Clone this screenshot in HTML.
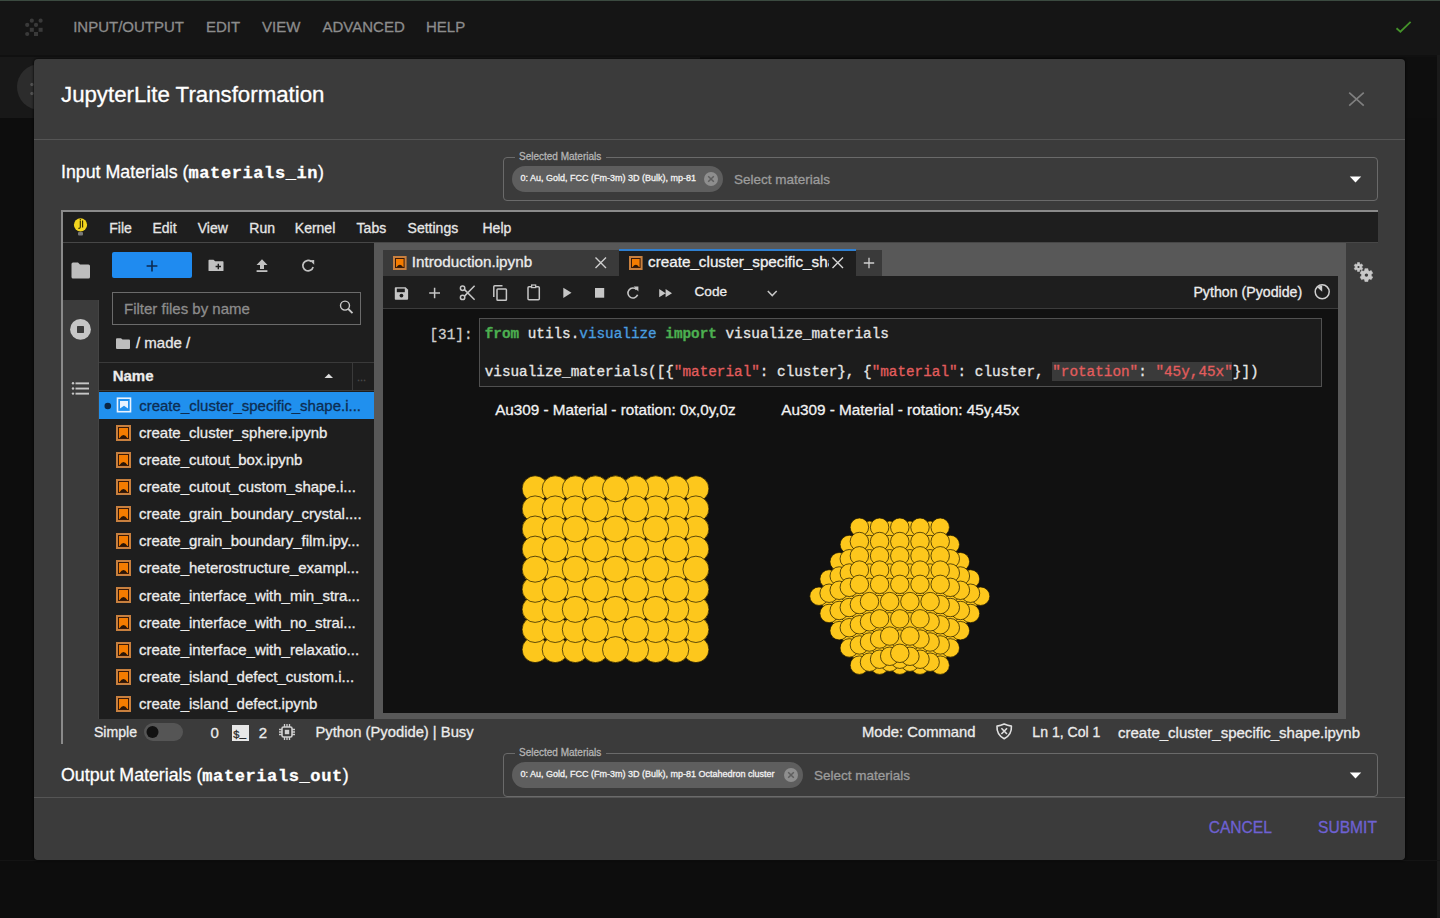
<!DOCTYPE html>
<html><head><meta charset="utf-8"><title>JupyterLite Transformation</title>
<style>
html,body{margin:0;padding:0}
body{width:1440px;height:918px;overflow:hidden;position:relative;background:#0e0e0e;font-family:"Liberation Sans",sans-serif}
.t{position:absolute;white-space:pre;-webkit-text-stroke:0.3px currentColor}
.r{position:absolute}
svg.r{overflow:visible}
.mn{font-family:'Liberation Mono',monospace;font-size:17px;letter-spacing:0.6px;font-weight:700}
</style></head><body>
<div class="r" style="left:0px;top:0px;width:1440px;height:55px;background:#151515;"></div>
<div class="r" style="left:0px;top:0px;width:1440px;height:1px;background:#3b4a40;"></div>
<div class="r" style="left:0px;top:55px;width:700px;height:63px;background:#181818;"></div>
<div class="r" style="left:0px;top:118px;width:1440px;height:800px;background:#0d0d0d;"></div>
<div class="r" style="left:0px;top:55px;width:1440px;height:2px;background:#101010;"></div>
<div class="r" style="left:1437px;top:55px;width:3px;height:863px;background:#1a1a1a;"></div>
<div class="r" style="left:0px;top:860px;width:1440px;height:1px;background:#141414;"></div>
<svg class="r" style="left:15px;top:10px;" width="40" height="35" viewBox="0 0 40 35"><circle cx="16.8" cy="10.7" r="2.1" fill="#3a3a3a"/><circle cx="25.6" cy="10.7" r="2.1" fill="#3a3a3a"/><circle cx="12.2" cy="14.899999999999999" r="2.1" fill="#3a3a3a"/><circle cx="21" cy="14.899999999999999" r="2.1" fill="#3a3a3a"/><rect x="14.8" y="17.8" width="4" height="4" fill="#3a3a3a"/><rect x="23.6" y="17.8" width="4" height="4" fill="#3a3a3a"/><circle cx="12.2" cy="24" r="2.1" fill="#3a3a3a"/><rect x="19" y="22" width="4" height="4" fill="#3a3a3a"/></svg>
<div class="t" style="left:73.2px;top:19.30px;font-size:15px;line-height:15px;color:#8c8c8c;font-family:'Liberation Sans', sans-serif;font-weight:400;">INPUT/OUTPUT</div>
<div class="t" style="left:205.9px;top:19.30px;font-size:15px;line-height:15px;color:#8c8c8c;font-family:'Liberation Sans', sans-serif;font-weight:400;">EDIT</div>
<div class="t" style="left:262.1px;top:19.30px;font-size:15px;line-height:15px;color:#8c8c8c;font-family:'Liberation Sans', sans-serif;font-weight:400;">VIEW</div>
<div class="t" style="left:322.5px;top:19.30px;font-size:15px;line-height:15px;color:#8c8c8c;font-family:'Liberation Sans', sans-serif;font-weight:400;">ADVANCED</div>
<div class="t" style="left:426px;top:19.30px;font-size:15px;line-height:15px;color:#8c8c8c;font-family:'Liberation Sans', sans-serif;font-weight:400;">HELP</div>
<svg class="r" style="left:1390px;top:15px;" width="30" height="25" viewBox="0 0 30 25"><path d="M6.5 13.3 L10.4 16.7 L20.6 6.9" fill="none" stroke="#44922a" stroke-width="1.8"/></svg>
<svg class="r" style="left:0px;top:60px;" width="40" height="60" viewBox="0 0 40 60"><circle cx="40" cy="27" r="23" fill="#2c2c2c"/><circle cx="32" cy="24.5" r="1.7" fill="#555"/><circle cx="32" cy="33.5" r="1.7" fill="#555"/></svg>
<div class="r" style="left:34px;top:59px;width:1371px;height:801px;background:#3b3b3b;border-radius:4px;box-shadow:0 0 2px 1px rgba(0,0,0,0.5)"></div>
<div class="t" style="left:61px;top:83.96px;font-size:22.25px;line-height:22.25px;color:#ffffff;font-family:'Liberation Sans', sans-serif;font-weight:400;">JupyterLite Transformation</div>
<svg class="r" style="left:1345px;top:88px;" width="24" height="24" viewBox="0 0 24 24"><path d="M4.2 4.6 L18.75 17.7 M18.75 4.6 L4.2 17.7" stroke="#808080" stroke-width="1.6" fill="none"/></svg>
<div class="r" style="left:34px;top:139px;width:1371px;height:1px;background:#555555;"></div>
<div class="t" style="left:61px;top:163.93px;font-size:17.8px;line-height:17.8px;color:#ffffff;font-family:'Liberation Sans', sans-serif;font-weight:400;">Input Materials (<span class="mn">materials_in</span>)</div>
<div class="r" style="left:503px;top:157px;width:873px;height:42px;border:1px solid #6a6a6a;border-radius:4px"></div>
<div class="r" style="left:515px;top:156px;width:91px;height:3px;background:#3b3b3b;"></div>
<div class="t" style="left:519px;top:151.83px;font-size:10px;line-height:10px;color:#b4b4b4;font-family:'Liberation Sans', sans-serif;font-weight:400;">Selected Materials</div>
<div class="r" style="left:512px;top:166.25px;width:211px;height:26px;border-radius:13px;background:#5e5e5e"></div>
<div class="t" style="left:520.5px;top:174.23px;font-size:9px;line-height:9px;color:#f2f2f2;font-family:'Liberation Sans', sans-serif;font-weight:400;">0: Au, Gold, FCC (Fm-3m) 3D (Bulk), mp-81</div>
<svg class="r" style="left:702.5px;top:171.25px;" width="16" height="16" viewBox="0 0 16 16"><circle cx="8" cy="8" r="7" fill="#8e8e8e"/><path d="M5.2 5.2 L10.8 10.8 M10.8 5.2 L5.2 10.8" stroke="#5e5e5e" stroke-width="1.5"/></svg>
<div class="t" style="left:734px;top:172.62px;font-size:13.5px;line-height:13.5px;color:#9c9c9c;font-family:'Liberation Sans', sans-serif;font-weight:400;">Select materials</div>
<svg class="r" style="left:1349px;top:176.25px;" width="13" height="7" viewBox="0 0 13 7"><path d="M0.8 0.5 L12.2 0.5 L6.5 6.5 Z" fill="#ffffff"/></svg>
<div class="r" style="left:61px;top:210px;width:1317px;height:534px;background:#3b3b3b;"></div>
<div class="r" style="left:61px;top:210px;width:1317px;height:2px;background:#8a8a8a;"></div>
<div class="r" style="left:61px;top:210px;width:2px;height:534px;background:#8a8a8a;"></div>
<div class="r" style="left:63px;top:212px;width:1315px;height:30px;background:#1e1e1e;"></div>
<div class="r" style="left:63px;top:242px;width:1315px;height:1px;background:#474747;"></div>
<svg class="r" style="left:70px;top:214px;" width="22" height="24" viewBox="0 0 22 24"><circle cx="10.5" cy="10.8" r="6.6" fill="#f3d51e"/><path d="M10.3 6.6 V12.8 Q10.3 14.6 8.4 14.4 M12.6 6.4 V13.6" stroke="#2a2400" stroke-width="1.1" fill="none"/><circle cx="10.3" cy="5.4" r="0.6" fill="#2a2400"/><rect x="8" y="18" width="5" height="3.6" rx="1" fill="#777"/></svg>
<div class="t" style="left:109.3px;top:220.85px;font-size:14px;line-height:14px;color:#e6e6e6;font-family:'Liberation Sans', sans-serif;font-weight:400;">File</div>
<div class="t" style="left:152.5px;top:220.85px;font-size:14px;line-height:14px;color:#e6e6e6;font-family:'Liberation Sans', sans-serif;font-weight:400;">Edit</div>
<div class="t" style="left:197.7px;top:220.85px;font-size:14px;line-height:14px;color:#e6e6e6;font-family:'Liberation Sans', sans-serif;font-weight:400;">View</div>
<div class="t" style="left:249.3px;top:220.85px;font-size:14px;line-height:14px;color:#e6e6e6;font-family:'Liberation Sans', sans-serif;font-weight:400;">Run</div>
<div class="t" style="left:294.8px;top:220.85px;font-size:14px;line-height:14px;color:#e6e6e6;font-family:'Liberation Sans', sans-serif;font-weight:400;">Kernel</div>
<div class="t" style="left:356.6px;top:220.85px;font-size:14px;line-height:14px;color:#e6e6e6;font-family:'Liberation Sans', sans-serif;font-weight:400;">Tabs</div>
<div class="t" style="left:407.6px;top:220.85px;font-size:14px;line-height:14px;color:#e6e6e6;font-family:'Liberation Sans', sans-serif;font-weight:400;">Settings</div>
<div class="t" style="left:482.5px;top:220.85px;font-size:14px;line-height:14px;color:#e6e6e6;font-family:'Liberation Sans', sans-serif;font-weight:400;">Help</div>
<div class="r" style="left:63px;top:243px;width:36px;height:476px;background:#3b3b3b;"></div>
<div class="r" style="left:63px;top:243px;width:36px;height:57px;background:#1e1e1e;"></div>
<div class="r" style="left:98px;top:300px;width:1px;height:419px;background:#444444;"></div>
<svg class="r" style="left:68px;top:258px;" width="26" height="24" viewBox="0 0 26 24"><path d="M3.5 6 Q3.5 4.5 5 4.5 L10 4.5 L12 6.5 L20.5 6.5 Q22 6.5 22 8 L22 19 Q22 20.5 20.5 20.5 L5 20.5 Q3.5 20.5 3.5 19 Z" fill="#bdbdbd"/></svg>
<svg class="r" style="left:68px;top:317px;" width="26" height="26" viewBox="0 0 26 26"><circle cx="12.5" cy="12.4" r="10.4" fill="#c6c6c6"/><rect x="9" y="8.9" width="7" height="7" rx="0.6" fill="#3b3b3b"/></svg>
<svg class="r" style="left:68px;top:378px;" width="26" height="20" viewBox="0 0 26 20"><g fill="#c6c6c6"><circle cx="5" cy="5.3" r="1.2"/><circle cx="5" cy="10.5" r="1.2"/><circle cx="5" cy="15.6" r="1.2"/><rect x="7.5" y="4.4" width="13.5" height="1.9"/><rect x="7.5" y="9.6" width="13.5" height="1.9"/><rect x="7.5" y="14.7" width="13.5" height="1.9"/></g></svg>
<div class="r" style="left:99px;top:243px;width:275px;height:476px;background:#1e1e1e;"></div>
<div class="r" style="left:112px;top:252px;width:80px;height:26px;background:#1f8bf0;border-radius:2px"></div>
<svg class="r" style="left:144px;top:257.5px;" width="16" height="16" viewBox="0 0 16 16"><path d="M8 2.6 L8 13.4 M2.6 8 L13.4 8" stroke="#0c2a50" stroke-width="1.6"/></svg>
<svg class="r" style="left:205px;top:256px;" width="22" height="18" viewBox="0 0 22 18"><path d="M3.5 4.5 Q3.5 3.8 4.2 3.8 L8.5 3.8 L10.2 5.3 L17.8 5.3 Q18.5 5.3 18.5 6 L18.5 14.4 Q18.5 15.1 17.8 15.1 L4.2 15.1 Q3.5 15.1 3.5 14.4 Z" fill="#c2c2c2"/><path d="M13.3 7.8 L13.3 13.2 M10.6 10.5 L16 10.5" stroke="#1e1e1e" stroke-width="1.4"/></svg>
<svg class="r" style="left:252px;top:256px;" width="20" height="18" viewBox="0 0 20 18"><path d="M10 3.2 L15.5 9 L12 9 L12 13 L8 13 L8 9 L4.5 9 Z" fill="#c2c2c2"/><rect x="4.6" y="14.2" width="10.8" height="1.8" fill="#c2c2c2"/></svg>
<svg class="r" style="left:298px;top:256px;" width="20" height="18" viewBox="0 0 20 18"><path d="M13.3 5.6 A5.2 5.2 0 1 0 15.1 11" fill="none" stroke="#c2c2c2" stroke-width="1.7"/><path d="M11.6 4.3 L16.2 4.1 L16.2 8.7 Z" fill="#c2c2c2"/></svg>
<div class="r" style="left:112px;top:292px;width:247px;height:31px;border:1px solid #6b6b6b"></div>
<div class="t" style="left:124px;top:301.30px;font-size:15px;line-height:15px;color:#8c8c8c;font-family:'Liberation Sans', sans-serif;font-weight:400;">Filter files by name</div>
<svg class="r" style="left:336px;top:297px;" width="22" height="22" viewBox="0 0 22 22"><circle cx="9" cy="8.6" r="4.5" fill="none" stroke="#c8c8c8" stroke-width="1.4"/><path d="M12.3 12 L16.5 16.2" stroke="#c8c8c8" stroke-width="1.8"/></svg>
<svg class="r" style="left:113px;top:334px;" width="20" height="18" viewBox="0 0 20 18"><path d="M3 5.2 Q3 4.2 4 4.2 L8 4.2 L9.5 5.6 L16 5.6 Q17 5.6 17 6.6 L17 14 Q17 15 16 15 L4 15 Q3 15 3 14 Z" fill="#bdbdbd"/></svg>
<div class="t" style="left:136px;top:335.10px;font-size:15px;line-height:15px;color:#e8e8e8;font-family:'Liberation Sans', sans-serif;font-weight:400;">/ made /</div>
<div class="r" style="left:99px;top:362px;width:275px;height:1px;background:#3a3a3a;"></div>
<div class="r" style="left:99px;top:390px;width:275px;height:1px;background:#3a3a3a;"></div>
<div class="r" style="left:352px;top:363px;width:1px;height:27px;background:#3a3a3a;"></div>
<div class="t" style="left:112.7px;top:368.10px;font-size:15px;line-height:15px;color:#ececec;font-family:'Liberation Sans', sans-serif;font-weight:700;">Name</div>
<svg class="r" style="left:319.5px;top:370px;" width="18" height="12" viewBox="0 0 18 12"><path d="M4.5 8 L13 8 L8.75 3.8 Z" fill="#dcdcdc"/></svg>
<div class="t" style="left:357px;top:371.69px;font-size:11px;line-height:11px;color:#4a4a4a;font-family:'Liberation Sans', sans-serif;font-weight:400;">...</div>
<div class="r" style="left:99px;top:392.3px;width:275px;height:26.5px;background:#2090ee;"></div>
<svg class="r" style="left:102px;top:397.3px;" width="12" height="18" viewBox="0 0 12 18"><circle cx="5.8" cy="9" r="3.3" fill="#0b2645"/></svg>
<svg class="r" style="left:114px;top:395.3px;" width="20" height="20" viewBox="0 0 20 20"><rect x="3.5" y="3.2" width="13" height="13.5" fill="none" stroke="#e8f2ff" stroke-width="1.6"/><path d="M6 6 L14 6 L14 13.5 L10 10.8 L6 13.5 Z" fill="#e8f2ff"/></svg>
<div class="t" style="left:139.2px;top:397.80px;font-size:15px;line-height:15px;color:#0d2d52;font-family:'Liberation Sans', sans-serif;font-weight:400;">create_cluster_specific_shape.i...</div>
<svg class="r" style="left:116px;top:424.8px;" width="15" height="16" viewBox="0 0 15 16"><rect x="1" y="1" width="13" height="14" fill="#3a1a08" stroke="#c8803f" stroke-width="2"/><rect x="3" y="3" width="9" height="10" fill="#f57c00"/><path d="M3.6 13.0 Q7.5 7.2 11.4 13.0 Z" fill="#2a1608"/></svg>
<div class="t" style="left:139px;top:424.90px;font-size:15px;line-height:15px;color:#ececec;font-family:'Liberation Sans', sans-serif;font-weight:400;">create_cluster_sphere.ipynb</div>
<svg class="r" style="left:116px;top:451.9px;" width="15" height="16" viewBox="0 0 15 16"><rect x="1" y="1" width="13" height="14" fill="#3a1a08" stroke="#c8803f" stroke-width="2"/><rect x="3" y="3" width="9" height="10" fill="#f57c00"/><path d="M3.6 13.0 Q7.5 7.2 11.4 13.0 Z" fill="#2a1608"/></svg>
<div class="t" style="left:139px;top:452.00px;font-size:15px;line-height:15px;color:#ececec;font-family:'Liberation Sans', sans-serif;font-weight:400;">create_cutout_box.ipynb</div>
<svg class="r" style="left:116px;top:479.0px;" width="15" height="16" viewBox="0 0 15 16"><rect x="1" y="1" width="13" height="14" fill="#3a1a08" stroke="#c8803f" stroke-width="2"/><rect x="3" y="3" width="9" height="10" fill="#f57c00"/><path d="M3.6 13.0 Q7.5 7.2 11.4 13.0 Z" fill="#2a1608"/></svg>
<div class="t" style="left:139px;top:479.10px;font-size:15px;line-height:15px;color:#ececec;font-family:'Liberation Sans', sans-serif;font-weight:400;">create_cutout_custom_shape.i...</div>
<svg class="r" style="left:116px;top:506.1px;" width="15" height="16" viewBox="0 0 15 16"><rect x="1" y="1" width="13" height="14" fill="#3a1a08" stroke="#c8803f" stroke-width="2"/><rect x="3" y="3" width="9" height="10" fill="#f57c00"/><path d="M3.6 13.0 Q7.5 7.2 11.4 13.0 Z" fill="#2a1608"/></svg>
<div class="t" style="left:139px;top:506.20px;font-size:15px;line-height:15px;color:#ececec;font-family:'Liberation Sans', sans-serif;font-weight:400;">create_grain_boundary_crystal....</div>
<svg class="r" style="left:116px;top:533.1999999999999px;" width="15" height="16" viewBox="0 0 15 16"><rect x="1" y="1" width="13" height="14" fill="#3a1a08" stroke="#c8803f" stroke-width="2"/><rect x="3" y="3" width="9" height="10" fill="#f57c00"/><path d="M3.6 13.0 Q7.5 7.2 11.4 13.0 Z" fill="#2a1608"/></svg>
<div class="t" style="left:139px;top:533.30px;font-size:15px;line-height:15px;color:#ececec;font-family:'Liberation Sans', sans-serif;font-weight:400;">create_grain_boundary_film.ipy...</div>
<svg class="r" style="left:116px;top:560.3000000000001px;" width="15" height="16" viewBox="0 0 15 16"><rect x="1" y="1" width="13" height="14" fill="#3a1a08" stroke="#c8803f" stroke-width="2"/><rect x="3" y="3" width="9" height="10" fill="#f57c00"/><path d="M3.6 13.0 Q7.5 7.2 11.4 13.0 Z" fill="#2a1608"/></svg>
<div class="t" style="left:139px;top:560.40px;font-size:15px;line-height:15px;color:#ececec;font-family:'Liberation Sans', sans-serif;font-weight:400;">create_heterostructure_exampl...</div>
<svg class="r" style="left:116px;top:587.4px;" width="15" height="16" viewBox="0 0 15 16"><rect x="1" y="1" width="13" height="14" fill="#3a1a08" stroke="#c8803f" stroke-width="2"/><rect x="3" y="3" width="9" height="10" fill="#f57c00"/><path d="M3.6 13.0 Q7.5 7.2 11.4 13.0 Z" fill="#2a1608"/></svg>
<div class="t" style="left:139px;top:587.50px;font-size:15px;line-height:15px;color:#ececec;font-family:'Liberation Sans', sans-serif;font-weight:400;">create_interface_with_min_stra...</div>
<svg class="r" style="left:116px;top:614.5px;" width="15" height="16" viewBox="0 0 15 16"><rect x="1" y="1" width="13" height="14" fill="#3a1a08" stroke="#c8803f" stroke-width="2"/><rect x="3" y="3" width="9" height="10" fill="#f57c00"/><path d="M3.6 13.0 Q7.5 7.2 11.4 13.0 Z" fill="#2a1608"/></svg>
<div class="t" style="left:139px;top:614.60px;font-size:15px;line-height:15px;color:#ececec;font-family:'Liberation Sans', sans-serif;font-weight:400;">create_interface_with_no_strai...</div>
<svg class="r" style="left:116px;top:641.6px;" width="15" height="16" viewBox="0 0 15 16"><rect x="1" y="1" width="13" height="14" fill="#3a1a08" stroke="#c8803f" stroke-width="2"/><rect x="3" y="3" width="9" height="10" fill="#f57c00"/><path d="M3.6 13.0 Q7.5 7.2 11.4 13.0 Z" fill="#2a1608"/></svg>
<div class="t" style="left:139px;top:641.70px;font-size:15px;line-height:15px;color:#ececec;font-family:'Liberation Sans', sans-serif;font-weight:400;">create_interface_with_relaxatio...</div>
<svg class="r" style="left:116px;top:668.6999999999999px;" width="15" height="16" viewBox="0 0 15 16"><rect x="1" y="1" width="13" height="14" fill="#3a1a08" stroke="#c8803f" stroke-width="2"/><rect x="3" y="3" width="9" height="10" fill="#f57c00"/><path d="M3.6 13.0 Q7.5 7.2 11.4 13.0 Z" fill="#2a1608"/></svg>
<div class="t" style="left:139px;top:668.80px;font-size:15px;line-height:15px;color:#ececec;font-family:'Liberation Sans', sans-serif;font-weight:400;">create_island_defect_custom.i...</div>
<svg class="r" style="left:116px;top:695.8000000000001px;" width="15" height="16" viewBox="0 0 15 16"><rect x="1" y="1" width="13" height="14" fill="#3a1a08" stroke="#c8803f" stroke-width="2"/><rect x="3" y="3" width="9" height="10" fill="#f57c00"/><path d="M3.6 13.0 Q7.5 7.2 11.4 13.0 Z" fill="#2a1608"/></svg>
<div class="t" style="left:139px;top:695.90px;font-size:15px;line-height:15px;color:#ececec;font-family:'Liberation Sans', sans-serif;font-weight:400;">create_island_defect.ipynb</div>
<div class="r" style="left:374px;top:243px;width:972px;height:476px;background:#585858;"></div>
<div class="r" style="left:1346px;top:243px;width:32px;height:476px;background:#3b3b3b;"></div>
<svg class="r" style="left:0;top:0" width="1440" height="918"><path d="M1357.34 263.91 L1357.47 262.62 L1359.53 262.62 L1359.66 263.91 L1360.59 264.45 L1361.78 263.92 L1362.81 265.70 L1361.76 266.46 L1361.76 267.54 L1362.81 268.30 L1361.78 270.08 L1360.59 269.55 L1359.66 270.09 L1359.53 271.38 L1357.47 271.38 L1357.34 270.09 L1356.41 269.55 L1355.22 270.08 L1354.19 268.30 L1355.24 267.54 L1355.24 266.46 L1354.19 265.70 L1355.22 263.92 L1356.41 264.45 Z" fill="#c8c8c8" stroke="#c8c8c8" stroke-width="0.6" stroke-linejoin="round"/><circle cx="1358.5" cy="267" r="1.1" fill="#3b3b3b"/><path d="M1364.67 270.51 L1364.89 268.67 L1367.91 268.67 L1368.13 270.51 L1369.51 271.31 L1371.21 270.58 L1372.72 273.19 L1371.23 274.30 L1371.23 275.90 L1372.72 277.01 L1371.21 279.62 L1369.51 278.89 L1368.13 279.69 L1367.91 281.53 L1364.89 281.53 L1364.67 279.69 L1363.29 278.89 L1361.59 279.62 L1360.08 277.01 L1361.57 275.90 L1361.57 274.30 L1360.08 273.19 L1361.59 270.58 L1363.29 271.31 Z" fill="#c8c8c8" stroke="#c8c8c8" stroke-width="0.6" stroke-linejoin="round"/><circle cx="1366.4" cy="275.1" r="1.7" fill="#3b3b3b"/></svg>
<div class="r" style="left:383px;top:249.6px;width:235.5px;height:26.400000000000006px;background:#3a3a3a;"></div>
<div class="r" style="left:383px;top:275.5px;width:235.5px;height:1.0px;background:#505050;"></div>
<svg class="r" style="left:392.6px;top:255.8px;" width="13.6" height="14" viewBox="0 0 13.6 14"><rect x="1" y="1" width="11.6" height="12" fill="#3a1a08" stroke="#c8803f" stroke-width="2"/><rect x="3" y="3" width="7.6" height="8" fill="#f57c00"/><path d="M3.6 11.0 Q6.8 6.3 10.0 11.0 Z" fill="#2a1608"/></svg>
<div class="t" style="left:411.8px;top:254.09px;font-size:15.25px;line-height:15.25px;color:#ececec;font-family:'Liberation Sans', sans-serif;font-weight:400;">Introduction.ipynb</div>
<svg class="r" style="left:592px;top:256px;" width="16" height="14" viewBox="0 0 16 14"><path d="M3.5 1.5 L14 12 M14 1.5 L3.5 12" stroke="#cfcfcf" stroke-width="1.4"/></svg>
<div class="r" style="left:619px;top:249px;width:236.5px;height:27px;background:#1e1e1e;"></div>
<div class="r" style="left:619px;top:249px;width:236.5px;height:2px;background:#2f7fd0;"></div>
<svg class="r" style="left:629px;top:255.8px;" width="13.6" height="14" viewBox="0 0 13.6 14"><rect x="1" y="1" width="11.6" height="12" fill="#3a1a08" stroke="#c8803f" stroke-width="2"/><rect x="3" y="3" width="7.6" height="8" fill="#f57c00"/><path d="M3.6 11.0 Q6.8 6.3 10.0 11.0 Z" fill="#2a1608"/></svg>
<div class="r" style="left:648px;top:252px;width:181px;height:22px;overflow:hidden">
<div class="t" style="left:0px;top:2.39px;font-size:15.25px;line-height:15.25px;color:#f2f2f2;font-family:'Liberation Sans', sans-serif;font-weight:400;">create_cluster_specific_shape.ipynb</div>
</div>
<svg class="r" style="left:829px;top:256px;" width="16" height="14" viewBox="0 0 16 14"><path d="M3.5 1.5 L14 12 M14 1.5 L3.5 12" stroke="#d8d8d8" stroke-width="1.4"/></svg>
<div class="r" style="left:856px;top:250px;width:26px;height:26px;background:#3a3a3a;"></div>
<svg class="r" style="left:861px;top:255px;" width="16" height="16" viewBox="0 0 16 16"><path d="M8 2.8 L8 13.2 M2.8 8 L13.2 8" stroke="#cfcfcf" stroke-width="1.3"/></svg>
<div class="r" style="left:383px;top:276px;width:955px;height:32px;background:#1e1e1e;"></div>
<div class="r" style="left:383px;top:307.5px;width:955px;height:1.0px;background:#3c3c3c;"></div>
<svg class="r" style="left:383px;top:276px;" width="420" height="32" viewBox="0 0 420 32"><path d="M12.6 11.2 H22.6 L25.1 13.7 V22.8 Q25.1 23.8 24.1 23.8 H12.6 Q11.8 23.8 11.8 23 V12 Q11.8 11.2 12.6 11.2 Z" fill="#c6c6c6"/><rect x="13.8" y="12.6" width="8" height="3.6" fill="#1e1e1e"/><circle cx="18.45" cy="19.6" r="1.9" fill="#1e1e1e"/><path d="M51.6 11.8 V22.3 M46.2 17 H57" stroke="#c6c6c6" stroke-width="1.5"/><g stroke="#c6c6c6" stroke-width="1.5" fill="none"><circle cx="79.6" cy="12.3" r="2.2"/><circle cx="79.6" cy="21.4" r="2.2"/><path d="M81.5 13.6 L91.6 23.8 M81.5 20.1 L91.6 9.8"/></g><g stroke="#c6c6c6" stroke-width="1.5" fill="none"><path d="M110.8 21 V10.8 Q110.8 9.8 111.8 9.8 H119.5"/><rect x="114" y="13" width="9.4" height="11.2" rx="0.8"/></g><g stroke="#c6c6c6" stroke-width="1.5" fill="none"><rect x="145" y="10.8" width="11.3" height="13" rx="1"/></g><path d="M148 8.4 H153.3 V12.2 H148 Z" fill="#c6c6c6"/><rect x="149.3" y="9.6" width="2.7" height="1.4" fill="#1e1e1e"/><path d="M180.3 11.7 L188.5 16.85 L180.3 22 Z" fill="#c6c6c6"/><rect x="212" y="12" width="9.2" height="9.7" fill="#c6c6c6"/><path d="M253.6 13.6 A5 5 0 1 0 254.6 18.8" fill="none" stroke="#c6c6c6" stroke-width="1.6"/><path d="M250.6 10.6 L255.4 10.6 L255.4 15.4 Z" fill="#c6c6c6"/><path d="M276.2 13 L282.6 17.15 L276.2 21.3 Z M282.6 13 L289 17.15 L282.6 21.3 Z" fill="#c6c6c6"/><path d="M384.8 15 L389.25 19.6 L393.7 15" fill="none" stroke="#c6c6c6" stroke-width="1.5"/></svg>
<div class="t" style="left:694.5px;top:285.08px;font-size:13.6px;line-height:13.6px;color:#ececec;font-family:'Liberation Sans', sans-serif;font-weight:400;">Code</div>
<div class="t" style="left:1193.4px;top:284.58px;font-size:14.2px;line-height:14.2px;color:#ececec;font-family:'Liberation Sans', sans-serif;font-weight:400;">Python (Pyodide)</div>
<svg class="r" style="left:1310px;top:280px;" width="24" height="24" viewBox="0 0 24 24"><circle cx="12.2" cy="11.8" r="7" fill="none" stroke="#cfcfcf" stroke-width="1.5"/><path d="M12.2 11.8 L12.2 5.5 A6.3 6.3 0 0 0 7.5 7.6 Z" fill="#cfcfcf"/></svg>
<div class="r" style="left:383px;top:308.5px;width:955px;height:404.5px;background:#111111;"></div>
<div class="r" style="left:479px;top:318px;width:841px;height:67px;border:1px solid #505050;background:#1c1c1c"></div>
<div class="r" style="left:1051.5px;top:361.7px;width:180.5px;height:19.100000000000023px;background:#3a3a3a;"></div>
<div class="t" style="left:429.5px;top:328.02px;font-size:14.33px;line-height:14.33px;color:#cfcfcf;font-family:'Liberation Mono', monospace;font-weight:400;">[31]:</div>
<div class="t" style="left:484.7px;top:327.32px;font-size:14.33px;line-height:14.33px;color:#e6e6e6;font-family:'Liberation Mono', monospace;font-weight:400;"><b style="color:#4caf50">from</b> utils.<span style="color:#4a9fe0">visualize</span> <b style="color:#4caf50">import</b> visualize_materials</div>
<div class="t" style="left:484.7px;top:364.72px;font-size:14.33px;line-height:14.33px;color:#e6e6e6;font-family:'Liberation Mono', monospace;font-weight:400;">visualize_materials([{<span style="color:#e35d5d">"material"</span>: cluster}, {<span style="color:#e35d5d">"material"</span>: cluster, <span style="color:#e35d5d">"rotation"</span>: <span style="color:#e35d5d">"45y,45x"</span>}])</div>
<div class="t" style="left:495.2px;top:402.09px;font-size:15.25px;line-height:15.25px;color:#f2f2f2;font-family:'Liberation Sans', sans-serif;font-weight:400;">Au309 - Material - rotation: 0x,0y,0z</div>
<div class="t" style="left:781.3px;top:402.05px;font-size:15.3px;line-height:15.3px;color:#f2f2f2;font-family:'Liberation Sans', sans-serif;font-weight:400;">Au309 - Material - rotation: 45y,45x</div>
<svg class="r" style="left:0;top:0" width="1440" height="918" viewBox="0 0 1440 918"><g fill="#fdc71c" stroke="#1a1400" stroke-width="0.7"><circle cx="555.20" cy="549.10" r="13.00"/><circle cx="575.30" cy="609.40" r="13.00"/><circle cx="655.70" cy="529.00" r="13.00"/><circle cx="595.40" cy="629.50" r="13.00"/><circle cx="655.70" cy="569.20" r="13.00"/><circle cx="655.70" cy="609.40" r="13.00"/><circle cx="635.60" cy="508.90" r="13.00"/><circle cx="675.80" cy="589.30" r="13.00"/><circle cx="575.30" cy="529.00" r="13.00"/><circle cx="575.30" cy="569.20" r="13.00"/><circle cx="615.50" cy="609.40" r="13.00"/><circle cx="595.40" cy="589.30" r="13.00"/><circle cx="635.60" cy="589.30" r="13.00"/><circle cx="635.60" cy="549.10" r="13.00"/><circle cx="635.60" cy="629.50" r="13.00"/><circle cx="615.50" cy="488.80" r="13.00"/><circle cx="595.40" cy="549.10" r="13.00"/><circle cx="595.40" cy="508.90" r="13.00"/><circle cx="615.50" cy="569.20" r="13.00"/><circle cx="555.20" cy="589.30" r="13.00"/><circle cx="675.80" cy="549.10" r="13.00"/><circle cx="615.50" cy="529.00" r="13.00"/><circle cx="535.10" cy="569.20" r="13.00"/><circle cx="615.50" cy="649.60" r="13.00"/><circle cx="695.90" cy="569.20" r="13.00"/><circle cx="675.80" cy="609.40" r="13.00"/><circle cx="575.30" cy="589.30" r="13.00"/><circle cx="635.60" cy="488.80" r="13.00"/><circle cx="575.30" cy="629.50" r="13.00"/><circle cx="655.70" cy="549.10" r="13.00"/><circle cx="555.20" cy="529.00" r="13.00"/><circle cx="535.10" cy="589.30" r="13.00"/><circle cx="595.40" cy="529.00" r="13.00"/><circle cx="615.50" cy="629.50" r="13.00"/><circle cx="655.70" cy="589.30" r="13.00"/><circle cx="635.60" cy="649.60" r="13.00"/><circle cx="595.40" cy="488.80" r="13.00"/><circle cx="635.60" cy="609.40" r="13.00"/><circle cx="635.60" cy="569.20" r="13.00"/><circle cx="595.40" cy="569.20" r="13.00"/><circle cx="555.20" cy="609.40" r="13.00"/><circle cx="555.20" cy="569.20" r="13.00"/><circle cx="675.80" cy="529.00" r="13.00"/><circle cx="675.80" cy="569.20" r="13.00"/><circle cx="615.50" cy="589.30" r="13.00"/><circle cx="535.10" cy="549.10" r="13.00"/><circle cx="615.50" cy="508.90" r="13.00"/><circle cx="615.50" cy="549.10" r="13.00"/><circle cx="635.60" cy="529.00" r="13.00"/><circle cx="655.70" cy="508.90" r="13.00"/><circle cx="575.30" cy="508.90" r="13.00"/><circle cx="655.70" cy="629.50" r="13.00"/><circle cx="595.40" cy="649.60" r="13.00"/><circle cx="595.40" cy="609.40" r="13.00"/><circle cx="575.30" cy="549.10" r="13.00"/><circle cx="695.90" cy="549.10" r="13.00"/><circle cx="695.90" cy="589.30" r="13.00"/><circle cx="575.30" cy="488.80" r="13.00"/><circle cx="595.40" cy="629.50" r="13.00"/><circle cx="655.70" cy="569.20" r="13.00"/><circle cx="555.20" cy="508.90" r="13.00"/><circle cx="555.20" cy="549.10" r="13.00"/><circle cx="575.30" cy="649.60" r="13.00"/><circle cx="575.30" cy="569.20" r="13.00"/><circle cx="675.80" cy="508.90" r="13.00"/><circle cx="675.80" cy="549.10" r="13.00"/><circle cx="555.20" cy="589.30" r="13.00"/><circle cx="555.20" cy="629.50" r="13.00"/><circle cx="615.50" cy="529.00" r="13.00"/><circle cx="615.50" cy="609.40" r="13.00"/><circle cx="535.10" cy="529.00" r="13.00"/><circle cx="615.50" cy="569.20" r="13.00"/><circle cx="635.60" cy="549.10" r="13.00"/><circle cx="635.60" cy="589.30" r="13.00"/><circle cx="615.50" cy="488.80" r="13.00"/><circle cx="635.60" cy="629.50" r="13.00"/><circle cx="595.40" cy="549.10" r="13.00"/><circle cx="535.10" cy="569.20" r="13.00"/><circle cx="595.40" cy="589.30" r="13.00"/><circle cx="595.40" cy="508.90" r="13.00"/><circle cx="655.70" cy="609.40" r="13.00"/><circle cx="655.70" cy="649.60" r="13.00"/><circle cx="675.80" cy="589.30" r="13.00"/><circle cx="635.60" cy="508.90" r="13.00"/><circle cx="675.80" cy="629.50" r="13.00"/><circle cx="655.70" cy="488.80" r="13.00"/><circle cx="655.70" cy="529.00" r="13.00"/><circle cx="575.30" cy="609.40" r="13.00"/><circle cx="575.30" cy="529.00" r="13.00"/><circle cx="615.50" cy="649.60" r="13.00"/><circle cx="535.10" cy="609.40" r="13.00"/><circle cx="695.90" cy="529.00" r="13.00"/><circle cx="695.90" cy="609.40" r="13.00"/><circle cx="695.90" cy="569.20" r="13.00"/><circle cx="695.90" cy="549.10" r="13.00"/><circle cx="535.10" cy="589.30" r="13.00"/><circle cx="595.40" cy="649.60" r="13.00"/><circle cx="575.30" cy="508.90" r="13.00"/><circle cx="655.70" cy="589.30" r="13.00"/><circle cx="575.30" cy="549.10" r="13.00"/><circle cx="635.60" cy="529.00" r="13.00"/><circle cx="675.80" cy="609.40" r="13.00"/><circle cx="635.60" cy="488.80" r="13.00"/><circle cx="655.70" cy="629.50" r="13.00"/><circle cx="555.20" cy="488.80" r="13.00"/><circle cx="555.20" cy="529.00" r="13.00"/><circle cx="555.20" cy="569.20" r="13.00"/><circle cx="575.30" cy="629.50" r="13.00"/><circle cx="575.30" cy="589.30" r="13.00"/><circle cx="655.70" cy="549.10" r="13.00"/><circle cx="635.60" cy="569.20" r="13.00"/><circle cx="595.40" cy="609.40" r="13.00"/><circle cx="615.50" cy="629.50" r="13.00"/><circle cx="595.40" cy="488.80" r="13.00"/><circle cx="595.40" cy="569.20" r="13.00"/><circle cx="595.40" cy="529.00" r="13.00"/><circle cx="635.60" cy="609.40" r="13.00"/><circle cx="635.60" cy="649.60" r="13.00"/><circle cx="615.50" cy="589.30" r="13.00"/><circle cx="615.50" cy="549.10" r="13.00"/><circle cx="535.10" cy="549.10" r="13.00"/><circle cx="615.50" cy="508.90" r="13.00"/><circle cx="555.20" cy="649.60" r="13.00"/><circle cx="535.10" cy="508.90" r="13.00"/><circle cx="695.90" cy="508.90" r="13.00"/><circle cx="535.10" cy="629.50" r="13.00"/><circle cx="655.70" cy="508.90" r="13.00"/><circle cx="675.80" cy="649.60" r="13.00"/><circle cx="675.80" cy="488.80" r="13.00"/><circle cx="675.80" cy="529.00" r="13.00"/><circle cx="675.80" cy="569.20" r="13.00"/><circle cx="555.20" cy="609.40" r="13.00"/><circle cx="695.90" cy="589.30" r="13.00"/><circle cx="695.90" cy="629.50" r="13.00"/><circle cx="695.90" cy="609.40" r="13.00"/><circle cx="675.80" cy="508.90" r="13.00"/><circle cx="695.90" cy="649.60" r="13.00"/><circle cx="675.80" cy="549.10" r="13.00"/><circle cx="555.20" cy="629.50" r="13.00"/><circle cx="535.10" cy="529.00" r="13.00"/><circle cx="555.20" cy="589.30" r="13.00"/><circle cx="535.10" cy="488.80" r="13.00"/><circle cx="615.50" cy="569.20" r="13.00"/><circle cx="595.40" cy="508.90" r="13.00"/><circle cx="615.50" cy="649.60" r="13.00"/><circle cx="615.50" cy="609.40" r="13.00"/><circle cx="535.10" cy="569.20" r="13.00"/><circle cx="615.50" cy="529.00" r="13.00"/><circle cx="695.90" cy="569.20" r="13.00"/><circle cx="595.40" cy="549.10" r="13.00"/><circle cx="575.30" cy="488.80" r="13.00"/><circle cx="635.60" cy="629.50" r="13.00"/><circle cx="595.40" cy="629.50" r="13.00"/><circle cx="575.30" cy="529.00" r="13.00"/><circle cx="635.60" cy="508.90" r="13.00"/><circle cx="655.70" cy="649.60" r="13.00"/><circle cx="655.70" cy="609.40" r="13.00"/><circle cx="575.30" cy="569.20" r="13.00"/><circle cx="635.60" cy="549.10" r="13.00"/><circle cx="635.60" cy="589.30" r="13.00"/><circle cx="595.40" cy="589.30" r="13.00"/><circle cx="615.50" cy="488.80" r="13.00"/><circle cx="655.70" cy="529.00" r="13.00"/><circle cx="675.80" cy="629.50" r="13.00"/><circle cx="655.70" cy="488.80" r="13.00"/><circle cx="675.80" cy="589.30" r="13.00"/><circle cx="575.30" cy="609.40" r="13.00"/><circle cx="575.30" cy="649.60" r="13.00"/><circle cx="555.20" cy="549.10" r="13.00"/><circle cx="535.10" cy="609.40" r="13.00"/><circle cx="695.90" cy="488.80" r="13.00"/><circle cx="535.10" cy="649.60" r="13.00"/><circle cx="695.90" cy="529.00" r="13.00"/><circle cx="555.20" cy="508.90" r="13.00"/><circle cx="655.70" cy="569.20" r="13.00"/><circle cx="635.60" cy="569.20" r="13.00"/><circle cx="635.60" cy="649.60" r="13.00"/><circle cx="615.50" cy="508.90" r="13.00"/><circle cx="595.40" cy="649.60" r="13.00"/><circle cx="575.30" cy="508.90" r="13.00"/><circle cx="575.30" cy="549.10" r="13.00"/><circle cx="655.70" cy="589.30" r="13.00"/><circle cx="615.50" cy="549.10" r="13.00"/><circle cx="675.80" cy="529.00" r="13.00"/><circle cx="695.90" cy="629.50" r="13.00"/><circle cx="615.50" cy="629.50" r="13.00"/><circle cx="595.40" cy="569.20" r="13.00"/><circle cx="595.40" cy="529.00" r="13.00"/><circle cx="635.60" cy="609.40" r="13.00"/><circle cx="595.40" cy="609.40" r="13.00"/><circle cx="635.60" cy="488.80" r="13.00"/><circle cx="655.70" cy="629.50" r="13.00"/><circle cx="675.80" cy="609.40" r="13.00"/><circle cx="635.60" cy="529.00" r="13.00"/><circle cx="535.10" cy="508.90" r="13.00"/><circle cx="675.80" cy="569.20" r="13.00"/><circle cx="535.10" cy="549.10" r="13.00"/><circle cx="555.20" cy="609.40" r="13.00"/><circle cx="575.30" cy="629.50" r="13.00"/><circle cx="555.20" cy="569.20" r="13.00"/><circle cx="555.20" cy="488.80" r="13.00"/><circle cx="555.20" cy="649.60" r="13.00"/><circle cx="675.80" cy="488.80" r="13.00"/><circle cx="695.90" cy="589.30" r="13.00"/><circle cx="595.40" cy="488.80" r="13.00"/><circle cx="695.90" cy="508.90" r="13.00"/><circle cx="655.70" cy="549.10" r="13.00"/><circle cx="655.70" cy="508.90" r="13.00"/><circle cx="675.80" cy="649.60" r="13.00"/><circle cx="575.30" cy="589.30" r="13.00"/><circle cx="695.90" cy="549.10" r="13.00"/><circle cx="535.10" cy="589.30" r="13.00"/><circle cx="535.10" cy="629.50" r="13.00"/><circle cx="555.20" cy="529.00" r="13.00"/><circle cx="615.50" cy="589.30" r="13.00"/><circle cx="675.80" cy="629.50" r="13.00"/><circle cx="635.60" cy="508.90" r="13.00"/><circle cx="635.60" cy="549.10" r="13.00"/><circle cx="655.70" cy="609.40" r="13.00"/><circle cx="575.30" cy="569.20" r="13.00"/><circle cx="575.30" cy="529.00" r="13.00"/><circle cx="655.70" cy="649.60" r="13.00"/><circle cx="595.40" cy="508.90" r="13.00"/><circle cx="615.50" cy="649.60" r="13.00"/><circle cx="615.50" cy="569.20" r="13.00"/><circle cx="675.80" cy="549.10" r="13.00"/><circle cx="555.20" cy="589.30" r="13.00"/><circle cx="535.10" cy="609.40" r="13.00"/><circle cx="555.20" cy="549.10" r="13.00"/><circle cx="695.90" cy="529.00" r="13.00"/><circle cx="695.90" cy="569.20" r="13.00"/><circle cx="655.70" cy="569.20" r="13.00"/><circle cx="655.70" cy="488.80" r="13.00"/><circle cx="655.70" cy="529.00" r="13.00"/><circle cx="575.30" cy="649.60" r="13.00"/><circle cx="575.30" cy="609.40" r="13.00"/><circle cx="555.20" cy="508.90" r="13.00"/><circle cx="575.30" cy="488.80" r="13.00"/><circle cx="535.10" cy="569.20" r="13.00"/><circle cx="615.50" cy="529.00" r="13.00"/><circle cx="595.40" cy="589.30" r="13.00"/><circle cx="635.60" cy="629.50" r="13.00"/><circle cx="595.40" cy="629.50" r="13.00"/><circle cx="615.50" cy="488.80" r="13.00"/><circle cx="635.60" cy="589.30" r="13.00"/><circle cx="595.40" cy="549.10" r="13.00"/><circle cx="675.80" cy="508.90" r="13.00"/><circle cx="695.90" cy="609.40" r="13.00"/><circle cx="675.80" cy="589.30" r="13.00"/><circle cx="555.20" cy="629.50" r="13.00"/><circle cx="535.10" cy="529.00" r="13.00"/><circle cx="615.50" cy="609.40" r="13.00"/><circle cx="535.10" cy="549.10" r="13.00"/><circle cx="675.80" cy="569.20" r="13.00"/><circle cx="635.60" cy="609.40" r="13.00"/><circle cx="635.60" cy="569.20" r="13.00"/><circle cx="615.50" cy="629.50" r="13.00"/><circle cx="615.50" cy="549.10" r="13.00"/><circle cx="595.40" cy="488.80" r="13.00"/><circle cx="555.20" cy="609.40" r="13.00"/><circle cx="675.80" cy="529.00" r="13.00"/><circle cx="695.90" cy="589.30" r="13.00"/><circle cx="595.40" cy="529.00" r="13.00"/><circle cx="535.10" cy="589.30" r="13.00"/><circle cx="615.50" cy="589.30" r="13.00"/><circle cx="655.70" cy="508.90" r="13.00"/><circle cx="675.80" cy="609.40" r="13.00"/><circle cx="655.70" cy="549.10" r="13.00"/><circle cx="575.30" cy="629.50" r="13.00"/><circle cx="555.20" cy="529.00" r="13.00"/><circle cx="695.90" cy="549.10" r="13.00"/><circle cx="555.20" cy="569.20" r="13.00"/><circle cx="575.30" cy="508.90" r="13.00"/><circle cx="655.70" cy="589.30" r="13.00"/><circle cx="575.30" cy="589.30" r="13.00"/><circle cx="655.70" cy="629.50" r="13.00"/><circle cx="635.60" cy="488.80" r="13.00"/><circle cx="635.60" cy="529.00" r="13.00"/><circle cx="595.40" cy="649.60" r="13.00"/><circle cx="615.50" cy="508.90" r="13.00"/><circle cx="635.60" cy="649.60" r="13.00"/><circle cx="575.30" cy="549.10" r="13.00"/><circle cx="595.40" cy="609.40" r="13.00"/><circle cx="595.40" cy="569.20" r="13.00"/><circle cx="675.80" cy="549.10" r="13.00"/><circle cx="675.80" cy="589.30" r="13.00"/><circle cx="555.20" cy="589.30" r="13.00"/><circle cx="615.50" cy="569.20" r="13.00"/><circle cx="615.50" cy="529.00" r="13.00"/><circle cx="535.10" cy="569.20" r="13.00"/><circle cx="615.50" cy="609.40" r="13.00"/><circle cx="615.50" cy="649.60" r="13.00"/><circle cx="595.40" cy="549.10" r="13.00"/><circle cx="595.40" cy="508.90" r="13.00"/><circle cx="635.60" cy="549.10" r="13.00"/><circle cx="635.60" cy="508.90" r="13.00"/><circle cx="575.30" cy="569.20" r="13.00"/><circle cx="655.70" cy="609.40" r="13.00"/><circle cx="575.30" cy="529.00" r="13.00"/><circle cx="635.60" cy="629.50" r="13.00"/><circle cx="615.50" cy="488.80" r="13.00"/><circle cx="595.40" cy="629.50" r="13.00"/><circle cx="635.60" cy="589.30" r="13.00"/><circle cx="595.40" cy="589.30" r="13.00"/><circle cx="655.70" cy="529.00" r="13.00"/><circle cx="655.70" cy="569.20" r="13.00"/><circle cx="575.30" cy="609.40" r="13.00"/><circle cx="695.90" cy="569.20" r="13.00"/><circle cx="555.20" cy="549.10" r="13.00"/></g><g fill="#fdc71c" stroke="#1a1400" stroke-width="0.7"><circle cx="919.99" cy="608.03" r="9.24"/><circle cx="899.80" cy="608.03" r="9.24"/><circle cx="879.61" cy="608.03" r="9.24"/><circle cx="859.41" cy="608.03" r="9.24"/><circle cx="940.19" cy="608.03" r="9.24"/><circle cx="869.51" cy="590.79" r="9.24"/><circle cx="889.70" cy="590.79" r="9.24"/><circle cx="909.90" cy="590.79" r="9.24"/><circle cx="930.09" cy="590.79" r="9.24"/><circle cx="879.61" cy="573.55" r="9.24"/><circle cx="899.80" cy="573.55" r="9.24"/><circle cx="919.99" cy="573.55" r="9.24"/><circle cx="909.90" cy="556.32" r="9.24"/><circle cx="889.70" cy="556.32" r="9.24"/><circle cx="899.80" cy="539.08" r="9.24"/><circle cx="859.41" cy="622.31" r="9.24"/><circle cx="899.80" cy="622.31" r="9.24"/><circle cx="879.61" cy="622.31" r="9.24"/><circle cx="940.19" cy="622.31" r="9.24"/><circle cx="919.99" cy="622.31" r="9.24"/><circle cx="849.31" cy="605.07" r="9.24"/><circle cx="869.51" cy="605.07" r="9.24"/><circle cx="889.70" cy="605.07" r="9.24"/><circle cx="909.90" cy="605.07" r="9.24"/><circle cx="930.09" cy="605.07" r="9.24"/><circle cx="950.29" cy="605.07" r="9.24"/><circle cx="859.41" cy="587.83" r="9.24"/><circle cx="879.61" cy="587.83" r="9.24"/><circle cx="899.80" cy="587.83" r="9.24"/><circle cx="919.99" cy="587.83" r="9.24"/><circle cx="940.19" cy="587.83" r="9.24"/><circle cx="889.70" cy="570.60" r="9.24"/><circle cx="869.51" cy="570.60" r="9.24"/><circle cx="909.90" cy="570.60" r="9.24"/><circle cx="930.09" cy="570.60" r="9.24"/><circle cx="899.80" cy="553.36" r="9.24"/><circle cx="879.61" cy="553.36" r="9.24"/><circle cx="919.99" cy="553.36" r="9.24"/><circle cx="940.19" cy="636.59" r="9.24"/><circle cx="919.99" cy="636.59" r="9.24"/><circle cx="899.80" cy="636.59" r="9.24"/><circle cx="879.61" cy="636.59" r="9.24"/><circle cx="859.41" cy="636.59" r="9.24"/><circle cx="909.90" cy="536.12" r="9.24"/><circle cx="889.70" cy="536.12" r="9.24"/><circle cx="849.31" cy="619.35" r="9.24"/><circle cx="869.51" cy="619.35" r="9.24"/><circle cx="889.70" cy="619.35" r="9.24"/><circle cx="909.90" cy="619.35" r="9.24"/><circle cx="930.09" cy="619.35" r="9.24"/><circle cx="950.29" cy="619.35" r="9.24"/><circle cx="859.41" cy="602.11" r="9.24"/><circle cx="839.22" cy="602.11" r="9.24"/><circle cx="960.38" cy="602.11" r="9.24"/><circle cx="919.99" cy="602.11" r="9.24"/><circle cx="899.80" cy="602.11" r="9.24"/><circle cx="879.61" cy="602.11" r="9.24"/><circle cx="940.19" cy="602.11" r="9.24"/><circle cx="869.51" cy="584.88" r="9.24"/><circle cx="889.70" cy="584.88" r="9.24"/><circle cx="849.31" cy="584.88" r="9.24"/><circle cx="950.29" cy="584.88" r="9.24"/><circle cx="930.09" cy="584.88" r="9.24"/><circle cx="909.90" cy="584.88" r="9.24"/><circle cx="859.41" cy="567.64" r="9.24"/><circle cx="879.61" cy="567.64" r="9.24"/><circle cx="940.19" cy="567.64" r="9.24"/><circle cx="919.99" cy="567.64" r="9.24"/><circle cx="899.80" cy="567.64" r="9.24"/><circle cx="899.80" cy="650.87" r="9.24"/><circle cx="859.41" cy="650.87" r="9.24"/><circle cx="879.61" cy="650.87" r="9.24"/><circle cx="919.99" cy="650.87" r="9.24"/><circle cx="940.19" cy="650.87" r="9.24"/><circle cx="889.70" cy="550.40" r="9.24"/><circle cx="869.51" cy="550.40" r="9.24"/><circle cx="909.90" cy="550.40" r="9.24"/><circle cx="930.09" cy="550.40" r="9.24"/><circle cx="849.31" cy="633.63" r="9.24"/><circle cx="909.90" cy="633.63" r="9.24"/><circle cx="889.70" cy="633.63" r="9.24"/><circle cx="869.51" cy="633.63" r="9.24"/><circle cx="930.09" cy="633.63" r="9.24"/><circle cx="950.29" cy="633.63" r="9.24"/><circle cx="899.80" cy="533.17" r="9.24"/><circle cx="879.61" cy="533.17" r="9.24"/><circle cx="919.99" cy="533.17" r="9.24"/><circle cx="839.22" cy="616.39" r="9.24"/><circle cx="859.41" cy="616.39" r="9.24"/><circle cx="879.61" cy="616.39" r="9.24"/><circle cx="899.80" cy="616.39" r="9.24"/><circle cx="919.99" cy="616.39" r="9.24"/><circle cx="940.19" cy="616.39" r="9.24"/><circle cx="960.38" cy="616.39" r="9.24"/><circle cx="849.31" cy="599.16" r="9.24"/><circle cx="829.12" cy="599.16" r="9.24"/><circle cx="869.51" cy="599.16" r="9.24"/><circle cx="889.70" cy="599.16" r="9.24"/><circle cx="909.90" cy="599.16" r="9.24"/><circle cx="930.09" cy="599.16" r="9.24"/><circle cx="950.29" cy="599.16" r="9.24"/><circle cx="970.48" cy="599.16" r="9.24"/><circle cx="839.22" cy="581.92" r="9.24"/><circle cx="859.41" cy="581.92" r="9.24"/><circle cx="879.61" cy="581.92" r="9.24"/><circle cx="899.80" cy="581.92" r="9.24"/><circle cx="919.99" cy="581.92" r="9.24"/><circle cx="940.19" cy="581.92" r="9.24"/><circle cx="960.38" cy="581.92" r="9.24"/><circle cx="859.41" cy="665.15" r="9.24"/><circle cx="879.61" cy="665.15" r="9.24"/><circle cx="899.80" cy="665.15" r="9.24"/><circle cx="919.99" cy="665.15" r="9.24"/><circle cx="940.19" cy="665.15" r="9.24"/><circle cx="849.31" cy="564.68" r="9.24"/><circle cx="869.51" cy="564.68" r="9.24"/><circle cx="889.70" cy="564.68" r="9.24"/><circle cx="909.90" cy="564.68" r="9.24"/><circle cx="930.09" cy="564.68" r="9.24"/><circle cx="950.29" cy="564.68" r="9.24"/><circle cx="849.31" cy="647.91" r="9.24"/><circle cx="869.51" cy="647.91" r="9.24"/><circle cx="889.70" cy="647.91" r="9.24"/><circle cx="909.90" cy="647.91" r="9.24"/><circle cx="930.09" cy="647.91" r="9.24"/><circle cx="950.29" cy="647.91" r="9.24"/><circle cx="859.41" cy="547.45" r="9.24"/><circle cx="879.61" cy="547.45" r="9.24"/><circle cx="899.80" cy="547.45" r="9.24"/><circle cx="919.99" cy="547.45" r="9.24"/><circle cx="940.19" cy="547.45" r="9.24"/><circle cx="839.22" cy="630.67" r="9.24"/><circle cx="859.41" cy="630.67" r="9.24"/><circle cx="879.61" cy="630.67" r="9.24"/><circle cx="899.80" cy="630.67" r="9.24"/><circle cx="919.99" cy="630.67" r="9.24"/><circle cx="940.19" cy="630.67" r="9.24"/><circle cx="960.38" cy="630.67" r="9.24"/><circle cx="869.51" cy="530.21" r="9.24"/><circle cx="889.70" cy="530.21" r="9.24"/><circle cx="909.90" cy="530.21" r="9.24"/><circle cx="930.09" cy="530.21" r="9.24"/><circle cx="829.12" cy="613.44" r="9.24"/><circle cx="849.31" cy="613.44" r="9.24"/><circle cx="869.51" cy="613.44" r="9.24"/><circle cx="889.70" cy="613.44" r="9.24"/><circle cx="909.90" cy="613.44" r="9.24"/><circle cx="930.09" cy="613.44" r="9.24"/><circle cx="950.29" cy="613.44" r="9.24"/><circle cx="970.48" cy="613.44" r="9.24"/><circle cx="819.02" cy="596.20" r="9.24"/><circle cx="839.22" cy="596.20" r="9.24"/><circle cx="859.41" cy="596.20" r="9.24"/><circle cx="879.61" cy="596.20" r="9.24"/><circle cx="899.80" cy="596.20" r="9.24"/><circle cx="919.99" cy="596.20" r="9.24"/><circle cx="940.19" cy="596.20" r="9.24"/><circle cx="960.38" cy="596.20" r="9.24"/><circle cx="980.58" cy="596.20" r="9.24"/><circle cx="829.12" cy="578.96" r="9.24"/><circle cx="849.31" cy="578.96" r="9.24"/><circle cx="869.51" cy="578.96" r="9.24"/><circle cx="889.70" cy="578.96" r="9.24"/><circle cx="909.90" cy="578.96" r="9.24"/><circle cx="930.09" cy="578.96" r="9.24"/><circle cx="950.29" cy="578.96" r="9.24"/><circle cx="970.48" cy="578.96" r="9.24"/><circle cx="869.51" cy="662.19" r="9.24"/><circle cx="889.70" cy="662.19" r="9.24"/><circle cx="909.90" cy="662.19" r="9.24"/><circle cx="930.09" cy="662.19" r="9.24"/><circle cx="839.22" cy="561.73" r="9.24"/><circle cx="859.41" cy="561.73" r="9.24"/><circle cx="879.61" cy="561.73" r="9.24"/><circle cx="899.80" cy="561.73" r="9.24"/><circle cx="919.99" cy="561.73" r="9.24"/><circle cx="940.19" cy="561.73" r="9.24"/><circle cx="960.38" cy="561.73" r="9.24"/><circle cx="859.41" cy="644.95" r="9.24"/><circle cx="879.61" cy="644.95" r="9.24"/><circle cx="899.80" cy="644.95" r="9.24"/><circle cx="919.99" cy="644.95" r="9.24"/><circle cx="940.19" cy="644.95" r="9.24"/><circle cx="849.31" cy="544.49" r="9.24"/><circle cx="869.51" cy="544.49" r="9.24"/><circle cx="889.70" cy="544.49" r="9.24"/><circle cx="909.90" cy="544.49" r="9.24"/><circle cx="930.09" cy="544.49" r="9.24"/><circle cx="950.29" cy="544.49" r="9.24"/><circle cx="849.31" cy="627.72" r="9.24"/><circle cx="869.51" cy="627.72" r="9.24"/><circle cx="889.70" cy="627.72" r="9.24"/><circle cx="909.90" cy="627.72" r="9.24"/><circle cx="930.09" cy="627.72" r="9.24"/><circle cx="950.29" cy="627.72" r="9.24"/><circle cx="859.41" cy="527.25" r="9.24"/><circle cx="879.61" cy="527.25" r="9.24"/><circle cx="899.80" cy="527.25" r="9.24"/><circle cx="919.99" cy="527.25" r="9.24"/><circle cx="940.19" cy="527.25" r="9.24"/><circle cx="839.22" cy="610.48" r="9.24"/><circle cx="859.41" cy="610.48" r="9.24"/><circle cx="879.61" cy="610.48" r="9.24"/><circle cx="899.80" cy="610.48" r="9.24"/><circle cx="919.99" cy="610.48" r="9.24"/><circle cx="940.19" cy="610.48" r="9.24"/><circle cx="960.38" cy="610.48" r="9.24"/><circle cx="829.12" cy="593.24" r="9.24"/><circle cx="849.31" cy="593.24" r="9.24"/><circle cx="909.90" cy="593.24" r="9.24"/><circle cx="889.70" cy="593.24" r="9.24"/><circle cx="869.51" cy="593.24" r="9.24"/><circle cx="930.09" cy="593.24" r="9.24"/><circle cx="950.29" cy="593.24" r="9.24"/><circle cx="970.48" cy="593.24" r="9.24"/><circle cx="839.22" cy="576.01" r="9.24"/><circle cx="859.41" cy="576.01" r="9.24"/><circle cx="879.61" cy="576.01" r="9.24"/><circle cx="919.99" cy="576.01" r="9.24"/><circle cx="899.80" cy="576.01" r="9.24"/><circle cx="940.19" cy="576.01" r="9.24"/><circle cx="960.38" cy="576.01" r="9.24"/><circle cx="879.61" cy="659.23" r="9.24"/><circle cx="899.80" cy="659.23" r="9.24"/><circle cx="919.99" cy="659.23" r="9.24"/><circle cx="849.31" cy="558.77" r="9.24"/><circle cx="869.51" cy="558.77" r="9.24"/><circle cx="909.90" cy="558.77" r="9.24"/><circle cx="930.09" cy="558.77" r="9.24"/><circle cx="889.70" cy="558.77" r="9.24"/><circle cx="950.29" cy="558.77" r="9.24"/><circle cx="869.51" cy="642.00" r="9.24"/><circle cx="889.70" cy="642.00" r="9.24"/><circle cx="930.09" cy="642.00" r="9.24"/><circle cx="909.90" cy="642.00" r="9.24"/><circle cx="859.41" cy="541.53" r="9.24"/><circle cx="879.61" cy="541.53" r="9.24"/><circle cx="899.80" cy="541.53" r="9.24"/><circle cx="940.19" cy="541.53" r="9.24"/><circle cx="919.99" cy="541.53" r="9.24"/><circle cx="899.80" cy="624.76" r="9.24"/><circle cx="859.41" cy="624.76" r="9.24"/><circle cx="879.61" cy="624.76" r="9.24"/><circle cx="940.19" cy="624.76" r="9.24"/><circle cx="919.99" cy="624.76" r="9.24"/><circle cx="869.51" cy="607.52" r="9.24"/><circle cx="849.31" cy="607.52" r="9.24"/><circle cx="889.70" cy="607.52" r="9.24"/><circle cx="930.09" cy="607.52" r="9.24"/><circle cx="909.90" cy="607.52" r="9.24"/><circle cx="950.29" cy="607.52" r="9.24"/><circle cx="839.22" cy="590.29" r="9.24"/><circle cx="859.41" cy="590.29" r="9.24"/><circle cx="899.80" cy="590.29" r="9.24"/><circle cx="879.61" cy="590.29" r="9.24"/><circle cx="919.99" cy="590.29" r="9.24"/><circle cx="940.19" cy="590.29" r="9.24"/><circle cx="960.38" cy="590.29" r="9.24"/><circle cx="849.31" cy="573.05" r="9.24"/><circle cx="889.70" cy="573.05" r="9.24"/><circle cx="909.90" cy="573.05" r="9.24"/><circle cx="869.51" cy="573.05" r="9.24"/><circle cx="950.29" cy="573.05" r="9.24"/><circle cx="930.09" cy="573.05" r="9.24"/><circle cx="909.90" cy="656.28" r="9.24"/><circle cx="889.70" cy="656.28" r="9.24"/><circle cx="879.61" cy="555.81" r="9.24"/><circle cx="940.19" cy="555.81" r="9.24"/><circle cx="899.80" cy="555.81" r="9.24"/><circle cx="859.41" cy="555.81" r="9.24"/><circle cx="919.99" cy="555.81" r="9.24"/><circle cx="879.61" cy="639.04" r="9.24"/><circle cx="899.80" cy="639.04" r="9.24"/><circle cx="919.99" cy="639.04" r="9.24"/><circle cx="869.51" cy="621.80" r="9.24"/><circle cx="909.90" cy="621.80" r="9.24"/><circle cx="930.09" cy="621.80" r="9.24"/><circle cx="889.70" cy="621.80" r="9.24"/><circle cx="879.61" cy="604.57" r="9.24"/><circle cx="859.41" cy="604.57" r="9.24"/><circle cx="899.80" cy="604.57" r="9.24"/><circle cx="940.19" cy="604.57" r="9.24"/><circle cx="919.99" cy="604.57" r="9.24"/><circle cx="849.31" cy="587.33" r="9.24"/><circle cx="889.70" cy="587.33" r="9.24"/><circle cx="869.51" cy="587.33" r="9.24"/><circle cx="930.09" cy="587.33" r="9.24"/><circle cx="909.90" cy="587.33" r="9.24"/><circle cx="950.29" cy="587.33" r="9.24"/><circle cx="879.61" cy="570.09" r="9.24"/><circle cx="899.80" cy="570.09" r="9.24"/><circle cx="919.99" cy="570.09" r="9.24"/><circle cx="859.41" cy="570.09" r="9.24"/><circle cx="940.19" cy="570.09" r="9.24"/><circle cx="899.80" cy="653.32" r="9.24"/><circle cx="889.70" cy="636.08" r="9.24"/><circle cx="909.90" cy="636.08" r="9.24"/><circle cx="899.80" cy="618.85" r="9.24"/><circle cx="879.61" cy="618.85" r="9.24"/><circle cx="919.99" cy="618.85" r="9.24"/><circle cx="869.51" cy="601.61" r="9.24"/><circle cx="889.70" cy="601.61" r="9.24"/><circle cx="909.90" cy="601.61" r="9.24"/><circle cx="930.09" cy="601.61" r="9.24"/><circle cx="859.41" cy="584.37" r="9.24"/><circle cx="919.99" cy="584.37" r="9.24"/><circle cx="899.80" cy="584.37" r="9.24"/><circle cx="940.19" cy="584.37" r="9.24"/><circle cx="879.61" cy="584.37" r="9.24"/></g></svg>
<div class="t" style="left:93.9px;top:725.46px;font-size:14.1px;line-height:14.1px;color:#ececec;font-family:'Liberation Sans', sans-serif;font-weight:400;">Simple</div>
<div class="r" style="left:143.5px;top:723px;width:39px;height:18px;border-radius:9px;background:#555"></div>
<svg class="r" style="left:143px;top:723px;" width="20" height="18" viewBox="0 0 20 18"><circle cx="9.5" cy="9" r="6" fill="#111"/></svg>
<div class="t" style="left:210.5px;top:724.70px;font-size:15px;line-height:15px;color:#ececec;font-family:'Liberation Sans', sans-serif;font-weight:400;">0</div>
<div class="r" style="left:231.5px;top:724.6px;width:17.0px;height:16.399999999999977px;background:#e8e8e8;"></div>
<div class="t" style="left:233px;top:729.57px;font-size:11px;line-height:11px;color:#2a2a2a;font-family:'Liberation Mono', monospace;font-weight:400;">$_</div>
<div class="t" style="left:258.8px;top:724.70px;font-size:15px;line-height:15px;color:#ececec;font-family:'Liberation Sans', sans-serif;font-weight:400;">2</div>
<svg class="r" style="left:278px;top:723px;" width="18" height="18" viewBox="0 0 18 18"><rect x="4" y="4" width="10" height="10" rx="1.5" fill="none" stroke="#d0d0d0" stroke-width="1.6"/><rect x="6.8" y="6.8" width="4.4" height="4.4" fill="#d0d0d0"/><g stroke="#d0d0d0" stroke-width="1.3"><path d="M6.5 1 V4 M9 1 V4 M11.5 1 V4 M6.5 14 V17 M9 14 V17 M11.5 14 V17 M1 6.5 H4 M1 9 H4 M1 11.5 H4 M14 6.5 H17 M14 9 H17 M14 11.5 H17"/></g></svg>
<div class="t" style="left:315.5px;top:724.89px;font-size:14.78px;line-height:14.78px;color:#ececec;font-family:'Liberation Sans', sans-serif;font-weight:400;">Python (Pyodide) | Busy</div>
<div class="t" style="left:862px;top:724.87px;font-size:14.8px;line-height:14.8px;color:#ececec;font-family:'Liberation Sans', sans-serif;font-weight:400;">Mode: Command</div>
<svg class="r" style="left:994px;top:722px;" width="20" height="20" viewBox="0 0 20 20"><path d="M10.2 2 Q13.5 3.6 17.4 4.1 Q18 12.6 10.2 16.8 Q2.4 12.6 3 4.1 Q6.9 3.6 10.2 2 Z" fill="none" stroke="#e0e0e0" stroke-width="1.6" stroke-linejoin="round"/><path d="M7.4 6.3 L13 12 M13 6.3 L7.4 12" stroke="#e0e0e0" stroke-width="1.6"/></svg>
<div class="t" style="left:1032.3px;top:725.46px;font-size:14.1px;line-height:14.1px;color:#ececec;font-family:'Liberation Sans', sans-serif;font-weight:400;">Ln 1, Col 1</div>
<div class="t" style="left:1118px;top:724.68px;font-size:15.02px;line-height:15.02px;color:#ececec;font-family:'Liberation Sans', sans-serif;font-weight:400;">create_cluster_specific_shape.ipynb</div>
<div class="t" style="left:61px;top:766.63px;font-size:17.8px;line-height:17.8px;color:#ffffff;font-family:'Liberation Sans', sans-serif;font-weight:400;">Output Materials (<span class="mn">materials_out</span>)</div>
<div class="r" style="left:503px;top:753px;width:873px;height:42px;border:1px solid #6a6a6a;border-radius:4px"></div>
<div class="r" style="left:515px;top:752px;width:91px;height:3px;background:#3b3b3b;"></div>
<div class="t" style="left:519px;top:747.83px;font-size:10px;line-height:10px;color:#b4b4b4;font-family:'Liberation Sans', sans-serif;font-weight:400;">Selected Materials</div>
<div class="r" style="left:512px;top:762.25px;width:291px;height:26px;border-radius:13px;background:#5e5e5e"></div>
<div class="t" style="left:520.5px;top:770.23px;font-size:9px;line-height:9px;color:#f2f2f2;font-family:'Liberation Sans', sans-serif;font-weight:400;">0: Au, Gold, FCC (Fm-3m) 3D (Bulk), mp-81 Octahedron cluster</div>
<svg class="r" style="left:782.5px;top:767.25px;" width="16" height="16" viewBox="0 0 16 16"><circle cx="8" cy="8" r="7" fill="#8e8e8e"/><path d="M5.2 5.2 L10.8 10.8 M10.8 5.2 L5.2 10.8" stroke="#5e5e5e" stroke-width="1.5"/></svg>
<div class="t" style="left:814px;top:768.62px;font-size:13.5px;line-height:13.5px;color:#9c9c9c;font-family:'Liberation Sans', sans-serif;font-weight:400;">Select materials</div>
<svg class="r" style="left:1349px;top:772.25px;" width="13" height="7" viewBox="0 0 13 7"><path d="M0.8 0.5 L12.2 0.5 L6.5 6.5 Z" fill="#ffffff"/></svg>
<div class="r" style="left:34px;top:798px;width:1371px;height:62px;background:#3b3b3b;border-radius:0 0 5px 5px"></div>
<div class="r" style="left:34px;top:797px;width:1371px;height:1px;background:#555555;"></div>
<div class="t" style="left:1208.7px;top:819.59px;font-size:15.6px;line-height:15.6px;color:#6e61d2;font-family:'Liberation Sans', sans-serif;font-weight:400;">CANCEL</div>
<div class="t" style="left:1318px;top:819.59px;font-size:15.6px;line-height:15.6px;color:#6e61d2;font-family:'Liberation Sans', sans-serif;font-weight:400;">SUBMIT</div>
</body></html>
